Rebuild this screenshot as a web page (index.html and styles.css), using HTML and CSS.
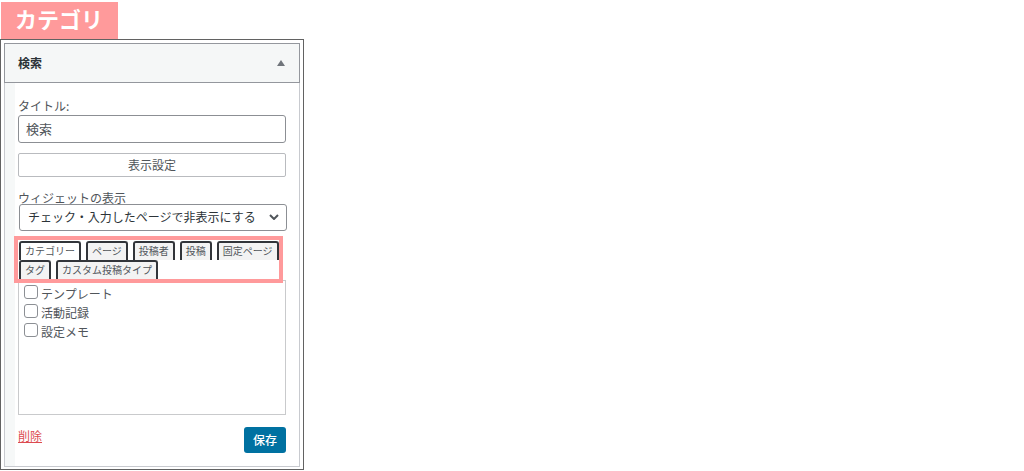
FILE: index.html
```html
<!DOCTYPE html>
<html lang="ja">
<head>
<meta charset="utf-8">
<title>カテゴリ</title>
<link rel="stylesheet" href="styles.css">
</head>
<body>
<main class="page">
  <h1 class="badge">カテゴリ</h1>
  <div class="frame">
    <section class="widget">
      <header class="widget-head">
        <h2 class="widget-title">検索</h2>
        <button class="toggle" type="button" aria-label="閉じる"><svg width="8" height="6" viewBox="0 0 8 6"><path d="M4 0L8 6H0z" fill="#70757b"/></svg></button>
      </header>
      <form class="widget-body">
        <label class="label" for="title">タイトル:</label>
        <input class="text" id="title" type="text" value="検索">
        <button class="settings" type="button">表示設定</button>
        <label class="label" for="display">ウィジェットの表示</label>
        <div class="select-wrap">
          <select class="select" id="display"><option>チェック・入力したページで非表示にする</option></select>
          <svg class="chevron" width="10" height="6" viewBox="0 0 10 6"><path d="M1 1L5 5L9 1" fill="none" stroke="#50555a" stroke-width="2"/></svg>
        </div>
        <div class="tabs">
          <button class="tab active" type="button">カテゴリー</button>
          <button class="tab" type="button">ページ</button>
          <button class="tab" type="button">投稿者</button>
          <button class="tab" type="button">投稿</button>
          <button class="tab" type="button">固定ページ</button>
          <button class="tab" type="button">タグ</button>
          <button class="tab" type="button">カスタム投稿タイプ</button>
        </div>
        <div class="panel">
          <label class="option"><input class="check" type="checkbox"><span>テンプレート</span></label>
          <label class="option"><input class="check" type="checkbox"><span>活動記録</span></label>
          <label class="option"><input class="check" type="checkbox"><span>設定メモ</span></label>
        </div>
        <div class="actions">
          <a class="delete" href="#">削除</a>
          <button class="save" type="button">保存</button>
        </div>
      </form>
    </section>
  </div>
</main>
</body>
</html>
```
FILE: styles.css
```css
* {
  box-sizing: border-box;
}

body {
  margin: 0;
  background: #fff;
  color: #50555a;
  font: 12px/16px "Noto Sans CJK JP", sans-serif;
}

button,
input,
select {
  margin: 0;
  color: inherit;
  font: inherit;
}

.page {
  display: flex;
  flex-direction: column;
  align-items: flex-start;
  padding-top: 2px;
}

.badge {
  margin: 0 0 0 1px;
  padding: 0 15px 5px 14px;
  background: #ff9a9b;
  color: #fff;
  font-size: 22px;
  font-weight: 700;
  line-height: 32px;
}

.frame {
  width: 100%;
  max-width: 304px;
  padding: 3px 3px 2px;
  border: 1px solid #626262;
}

.widget {
  border: 1px solid #c8cacf;
}

.widget-head {
  display: flex;
  align-items: center;
  justify-content: space-between;
  height: 40px;
  margin: -1px -1px 0;
  padding: 0 14px 0 13px;
  border: 1px solid #94979d;
  background: #f5f7f7;
}

.widget-title {
  margin: 0;
  color: #2c3338;
  font-size: 12px;
  font-weight: 700;
}

.toggle {
  display: flex;
  padding: 0;
  border: 0;
  background: none;
}

.widget-body {
  display: flex;
  flex-direction: column;
  padding: 15px 13px 13px 3px;
  border-left: 10px solid #f6f8f8;
}

.label {
  height: 17px;
}

.text {
  width: 100%;
  height: 28px;
  padding: 0 7px 2px;
  border: 1px solid #8c8f94;
  border-radius: 3px;
  background: #fff;
  font-size: 13px;
}

.settings {
  height: 24px;
  margin: 10px 0 13px;
  padding: 0;
  border: 1px solid #b9bbbf;
  border-radius: 2px;
  background: #fff;
}

.select-wrap {
  position: relative;
  height: 27px;
  margin: -3px -1px 0 1px;
}

.select {
  width: 100%;
  height: 27px;
  padding: 0 20px 1px 8px;
  border: 1px solid #8c8f94;
  border-radius: 3px;
  background: #fff;
  color: #2c3338;
  appearance: none;
}

.chevron {
  position: absolute;
  top: 10px;
  right: 8px;
  pointer-events: none;
}

.tabs {
  z-index: 1;
  display: flex;
  flex-wrap: wrap;
  gap: 0 5px;
  margin: 5px 3px 0 -4px;
  padding: 1px 0 0 1px;
  border: 4px solid #ff9a9b;
  background: #fff;
}

.tab {
  height: 19px;
  padding: 0 4px 2px;
  border: 2px solid #32353a;
  border-bottom: 0;
  border-radius: 3px 3px 0 0;
  background: #f3f3f3;
  font-size: 10px;
  line-height: 15px;
}

.tab.active {
  background: #fff;
}

.panel {
  min-height: 135px;
  margin-top: -3px;
  padding: 4px 5px;
  border: 1px solid #c9cacc;
}

.option {
  display: flex;
  align-items: flex-start;
  gap: 3px;
  height: 19px;
}

.option span {
  padding-top: 1px;
}

.check {
  width: 14px;
  height: 14px;
  border: 1px solid #8c8f94;
  border-radius: 3px;
  background: #fff;
  appearance: none;
}

.actions {
  display: flex;
  align-items: flex-start;
  justify-content: space-between;
  margin-top: 12px;
}

.delete {
  color: #dc4b50;
  line-height: 18px;
}

.save {
  height: 26px;
  padding: 0 9px;
  border: 0;
  border-radius: 3px;
  background: #0071a1;
  color: #fff;
  font-weight: 500;
}
```
